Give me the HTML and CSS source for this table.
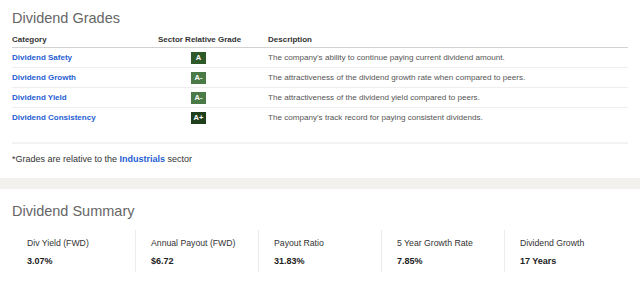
FILE: index.html
```html
<!DOCTYPE html>
<html>
<head>
<meta charset="utf-8">
<link rel="stylesheet" href="styles.css">
</head>
<body>
<section class="grades">
  <h2 class="title">Dividend Grades</h2>
  <div class="grade-table">
    <div class="row head">
      <div class="c-cat">Category</div>
      <div class="c-grade">Sector Relative Grade</div>
      <div class="c-desc">Description</div>
    </div>
    <div class="row">
      <div class="c-cat"><a class="link">Dividend Safety</a></div>
      <div class="c-grade"><span class="badge b-a">A</span></div>
      <div class="c-desc">The company's ability to continue paying current dividend amount.</div>
    </div>
    <div class="row">
      <div class="c-cat"><a class="link">Dividend Growth</a></div>
      <div class="c-grade"><span class="badge b-am">A-</span></div>
      <div class="c-desc">The attractiveness of the dividend growth rate when compared to peers.</div>
    </div>
    <div class="row">
      <div class="c-cat"><a class="link">Dividend Yield</a></div>
      <div class="c-grade"><span class="badge b-am">A-</span></div>
      <div class="c-desc">The attractiveness of the dividend yield compared to peers.</div>
    </div>
    <div class="row last">
      <div class="c-cat"><a class="link">Dividend Consistency</a></div>
      <div class="c-grade"><span class="badge b-ap">A+</span></div>
      <div class="c-desc">The company's track record for paying consistent dividends.</div>
    </div>
  </div>
  <div class="table-end"></div>
  <p class="note">*Grades are relative to the <a class="link note-link">Industrials</a> sector</p>
</section>
<div class="band"></div>
<section class="summary">
  <h2 class="title">Dividend Summary</h2>
  <div class="stats">
    <div class="stat"><div class="label">Div Yield (FWD)</div><div class="value">3.07%</div></div>
    <div class="stat"><div class="label">Annual Payout (FWD)</div><div class="value">$6.72</div></div>
    <div class="stat"><div class="label">Payout Ratio</div><div class="value">31.83%</div></div>
    <div class="stat"><div class="label">5 Year Growth Rate</div><div class="value">7.85%</div></div>
    <div class="stat"><div class="label">Dividend Growth</div><div class="value">17 Years</div></div>
  </div>
</section>
</body>
</html>
```
FILE: styles.css
```css
* { box-sizing: border-box; }
html, body { margin: 0; padding: 0; background: #fff; }
body {
  font-family: "Liberation Sans", Arial, sans-serif;
  color: #333;
  width: 640px;
  height: 281px;
  overflow: hidden;
}
.grades { padding: 7px 12px 0 12px; }
.title {
  margin: 0;
  font-size: 14.5px;
  font-weight: 400;
  color: #666;
  line-height: 22px;
}
.grade-table { width: 616px; font-size: 8.1px; line-height: 10px; }
.row {
  display: grid;
  grid-template-columns: 146px 81px 1fr;
  align-items: center;
  height: 20px;
  border-bottom: 1px solid #eeeeee;
  color: #555;
}
.row.head {
  height: 19px;
  padding-top: 3px;
  border-bottom: 1px solid #d2d2d2;
  font-weight: 700;
  font-size: 8px;
  color: #333;
}
.row.last { border-bottom: none; }
.c-grade { text-align: center; white-space: nowrap; }
.c-desc { padding-left: 29px; white-space: nowrap; }
.link { color: #1f5dd3; font-weight: 700; text-decoration: none; font-size: 8px; }
.note-link { font-size: inherit; }
.badge {
  display: inline-block;
  width: 15px;
  height: 12px;
  line-height: 12px;
  color: #fff;
  font-size: 7.5px;
  font-weight: 700;
  text-align: center;
  vertical-align: middle;
}
.b-a { background: #2e5a2a; }
.b-am { background: #4a7a45; }
.b-ap { background: #1f3f1c; }
.table-end { height: 16px; border-bottom: 2px solid #f3f3f3; }
.note {
  margin: 0;
  padding: 10px 0 0;
  height: 34px;
  font-size: 9px;
  line-height: 10px;
  color: #333;
}
.band { height: 11px; background: #f2f1ee; }
.summary { padding: 11px 12px 0 12px; }
.stats { display: flex; margin-top: 8px; }
.stat {
  width: 123px;
  height: 42px;
  padding: 8px 0 0 15px;
  border-left: 1px solid #ececec;
  line-height: 10px;
}
.stat:first-child { border-left: none; }
.label { color: #333; font-size: 8.7px; }
.value { font-weight: 700; color: #222; margin-top: 8px; font-size: 9px; }
```
